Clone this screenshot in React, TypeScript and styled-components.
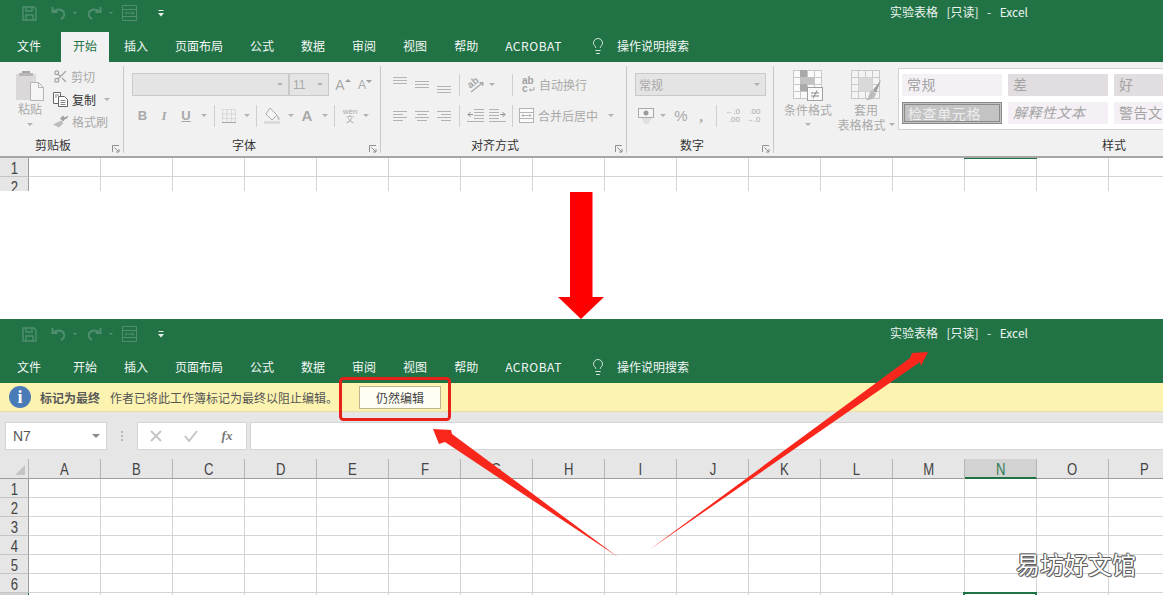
import React from "react";
import styled, { createGlobalStyle } from "styled-components";
import { Scissors, Lightbulb } from "lucide-react";

const CJK = `"Noto Sans CJK SC", "Noto Sans", sans-serif`;
const LATIN = `"Liberation Sans", "Noto Sans CJK SC", sans-serif`;
const GREEN = "#217346";
const MUTED = "#a9a9a9";

const Global = createGlobalStyle`
  html, body { margin: 0; padding: 0; height: 595px; overflow: hidden; background: #fff; }
  body { font-family: ${CJK}; font-size: 12px; }
  #root { width: 1163px; height: 595px; overflow: hidden; }
`;

const Page = styled.div`
  position: relative;
  width: 1163px;
  height: 595px;
  overflow: hidden;
  display: flex;
  flex-direction: column;
`;

/* ---------- title and tabs ---------- */
const GreenBar = styled.header<{ $top: number }>`
  background: ${GREEN};
  padding-top: ${(p) => p.$top}px;
  color: #fff;
  flex: none;
`;
const TitleRow = styled.div`
  height: 31px;
  display: flex;
  align-items: center;
  justify-content: space-between;
  padding: 0 135px 7px 22px;
  box-sizing: border-box;
`;
const Qat = styled.div`
  display: flex;
  align-items: center;
  margin-top: 2px;
`;
const QatSlot = styled.span<{ $w: number }>`
  width: ${(p) => p.$w}px;
  height: 16px;
  display: flex;
  align-items: center;
  justify-content: flex-start;
`;
const DimCaret = styled.span`
  width: 0;
  height: 0;
  border-left: 2px solid transparent;
  border-right: 2px solid transparent;
  border-top: 2px solid #5b9679;
`;
const Title = styled.div`
  display: flex;
  gap: 8.5px;
  font-size: 12px;
  color: #eef5f1;
  line-height: 16px;
`;
const TabRow = styled.nav`
  height: 31px;
  display: flex;
  gap: 3px;
  padding-left: 5px;
  overflow: hidden;
`;
const Tab = styled.div<{ $active?: boolean; $gapAfter?: number }>`
  padding: 0 12px;
  margin-top: ${(p) => (p.$active ? 1 : 0)}px;
  margin-right: ${(p) => p.$gapAfter ?? 0}px;
  line-height: ${(p) => (p.$active ? 27 : 29)}px;
  font-size: 12px;
  color: ${(p) => (p.$active ? GREEN : "#f3f7f5")};
  background: ${(p) => (p.$active ? "#f1f1f1" : "transparent")};
`;
const WideTab = styled(Tab)`
  letter-spacing: 0.55px;
`;
const TellMe = styled.div`
  display: flex;
  align-items: center;
  gap: 10px;
  height: 29px;
  margin-left: 12px;
  color: #f3f7f5;
`;

/* ---------- ribbon ---------- */
const Ribbon = styled.section`
  height: 90px;
  background: #f1f1f1;
  padding-top: 4px;
  display: flex;
  overflow: hidden;
  flex: none;
  border-bottom: 2px solid #a6a6a6;
`;
const Group = styled.div<{ $w: number }>`
  position: relative;
  flex: none;
  width: ${(p) => p.$w}px;
  height: 87px;
  box-sizing: border-box;
  border-right: 1px solid #c8c8c8;
  display: flex;
  flex-direction: column;
  &:last-child { border-right: none; }
`;
const GroupBody = styled.div<{ $pad?: number }>`
  height: 71px;
  padding-left: ${(p) => p.$pad ?? 0}px;
  display: flex;
  flex-direction: column;
`;
const Caption = styled.div<{ $inset?: number }>`
  height: 16px;
  line-height: 16px;
  text-align: center;
  font-size: 12px;
  color: #333;
  padding-right: ${(p) => p.$inset ?? 0}px;
`;
const Launcher = styled.span`
  position: absolute;
  right: 3px;
  bottom: 0px;
  width: 8px;
  height: 8px;
  display: flex;
`;
const Row1 = styled.div`
  margin-top: 7px;
  height: 23px;
  display: flex;
  align-items: center;
`;
const Row2 = styled.div`
  margin-top: 8px;
  height: 23px;
  display: flex;
  align-items: center;
`;
const Slot = styled.span<{ $w: number; $align?: string }>`
  flex: none;
  width: ${(p) => p.$w}px;
  height: 23px;
  display: flex;
  align-items: center;
  justify-content: ${(p) => p.$align ?? "center"};
  color: ${MUTED};
  font-family: ${LATIN};
`;
const Caret = styled.span`
  width: 0;
  height: 0;
  border-left: 3px solid transparent;
  border-right: 3px solid transparent;
  border-top: 3px solid #b2b2b2;
`;
const PasteCaret = styled(Caret)`
  margin-top: 6px;
`;
const Sep = styled.span<{ $m?: number }>`
  flex: none;
  width: 1px;
  height: 22px;
  background: #cfcfcf;
  margin: 0 ${(p) => p.$m ?? 3}px;
`;
const Combo = styled.div<{ $w: number }>`
  flex: none;
  width: ${(p) => p.$w}px;
  height: 23px;
  box-sizing: border-box;
  background: #e4e4e4;
  border: 1px solid #c9c9c9;
  display: flex;
  align-items: center;
  justify-content: space-between;
  padding: 0 5px 0 3px;
  color: ${MUTED};
  font-size: 12px;
  font-family: ${LATIN};
`;
const Bold = styled.b`
  font-size: 13px;
`;
const Italic = styled.i`
  font-size: 13px;
  font-family: "Liberation Serif", serif;
  font-weight: 700;
`;
const Under = styled.b`
  font-size: 13px;
  text-decoration: underline;
`;
const BigA = styled.b`
  font-size: 15px;
`;
const GrowA = styled.span<{ $size: number }>`
  font-size: ${(p) => p.$size}px;
  position: relative;
`;
const TinyArrow = styled.span<{ $up?: boolean }>`
  position: absolute;
  right: -6px;
  top: 2px;
  width: 0;
  height: 0;
  border-left: 3px solid transparent;
  border-right: 3px solid transparent;
  border-${(p) => (p.$up ? "bottom" : "top")}: 3px solid #9f9f9f;
`;
const Pinyin = styled.span`
  display: flex;
  flex-direction: column;
  align-items: center;
  font-size: 8px;
  line-height: 8px;
`;
const TextLabel = styled.span<{ $dark?: boolean }>`
  font-size: 12px;
  font-family: ${CJK};
  color: ${(p) => (p.$dark ? "#333" : MUTED)};
  white-space: nowrap;
`;
const Percent = styled.span`
  font-size: 15px;
`;
const Comma = styled.b`
  font-size: 15px;
  line-height: 10px;
  font-family: "Liberation Serif", serif;
`;
const Decimal = styled.span`
  display: flex;
  flex-direction: column;
  align-items: flex-end;
  font-size: 8px;
  line-height: 8px;
`;

/* clipboard */
const ClipLayout = styled.div`
  display: flex;
  height: 71px;
  padding-left: 15px;
`;
const PasteButton = styled.div`
  width: 30px;
  margin-top: 4px;
  display: flex;
  flex-direction: column;
  align-items: center;
  gap: 1px;
  color: ${MUTED};
  line-height: 14px;
`;
const ClipCol = styled.div`
  margin: 0 0 0 8px;
  display: flex;
  flex-direction: column;
`;
const ClipItem = styled.div`
  height: 22.5px;
  margin-top: -0.3px;
  display: flex;
  align-items: center;
  gap: 3px;
`;

/* styles */
const StyleLayout = styled.div`
  display: flex;
  height: 71px;
`;
const BigTool = styled.div<{ $w: number; $ml: number }>`
  width: ${(p) => p.$w}px;
  margin-left: ${(p) => p.$ml}px;
  padding-top: 4px;
  box-sizing: border-box;
  display: flex;
  flex-direction: column;
  align-items: center;
  color: ${MUTED};
  line-height: 15px;
`;
const ToolIcon = styled.span`
  height: 32px;
  display: flex;
`;
const ToolLine = styled.span`
  display: flex;
  align-items: center;
  gap: 3px;
  height: 15px;
  white-space: nowrap;
`;
const Gallery = styled.div`
  margin: 2px 0 0 2px;
  height: 62px;
  box-sizing: border-box;
  background: #fff;
  border: 1px solid #d2d2d2;
  border-right: none;
  padding: 5px 3px;
  display: grid;
  grid-template-columns: repeat(3, 100px);
  grid-template-rows: 22px 22px;
  gap: 6px;
  width: 290px;
`;
const StyleCell = styled.div<{ $bg: string; $italic?: boolean; $checked?: boolean }>`
  background: ${(p) => p.$bg};
  box-sizing: border-box;
  padding-left: ${(p) => (p.$checked ? 3 : 5)}px;
  font-size: 14px;
  line-height: ${(p) => (p.$checked ? 16 : 21)}px;
  letter-spacing: ${(p) => (p.$checked ? 0.6 : 0.5)}px;
  white-space: nowrap;
  color: ${(p) => (p.$checked ? "#eeeeee" : "#a3a3a3")};
  font-style: ${(p) => (p.$italic ? "italic" : "normal")};
  border: ${(p) => (p.$checked ? "3px double #8a8a8a" : "none")};
`;

/* ---------- notice and formula bar ---------- */
const Notice = styled.div`
  height: 29px;
  box-sizing: border-box;
  flex: none;
  background: #fcf3b1;
  border-bottom: 1px solid #e7e0a2;
  display: flex;
  align-items: center;
  padding-left: 9px;
  color: #555;
`;
const InfoDot = styled.span`
  width: 22px;
  height: 22px;
  border-radius: 50%;
  background: #4a7bb7;
  color: #fff;
  display: flex;
  align-items: center;
  justify-content: center;
  font: 700 18px "Liberation Serif", serif;
  margin-right: 9px;
`;
const NoticeHead = styled.strong`
  font-weight: 700;
  margin-right: 10px;
  color: #5a5a5a;
`;
const NoticeBtn = styled.button`
  margin-left: 21px;
  width: 82px;
  height: 23px;
  padding: 0;
  background: #fffef5;
  border: 1px solid #bdb68f;
  font: 12px ${CJK};
  color: #444;
`;
const FormulaArea = styled.div`
  flex: none;
  height: 47px;
  box-sizing: border-box;
  background: #e6e6e6;
  padding: 10px 0 0 5px;
  display: flex;
  align-items: flex-start;
`;
const NameBox = styled.div`
  width: 102px;
  height: 28px;
  box-sizing: border-box;
  background: #fff;
  border: 1px solid #d4d4d4;
  display: flex;
  align-items: center;
  justify-content: space-between;
  padding: 0 6px 0 7px;
  font: 14px ${LATIN};
  color: #555;
`;
const GripDots = styled.span`
  width: 30px;
  height: 28px;
  display: flex;
  flex-direction: column;
  align-items: center;
  justify-content: center;
  gap: 2px;
  & > i { width: 2px; height: 2px; background: #b8b8b8; display: block; }
`;
const FxBox = styled.div`
  width: 110px;
  height: 28px;
  box-sizing: border-box;
  background: #fff;
  border: 1px solid #d4d4d4;
  display: flex;
  align-items: center;
`;
const FxSlot = styled.span<{ $w: number }>`
  width: ${(p) => p.$w}px;
  display: flex;
  justify-content: center;
  align-items: center;
`;
const FxText = styled.i`
  font: italic 700 13px "Liberation Serif", serif;
  color: #777;
`;
const FormulaInput = styled.div`
  flex: 1;
  height: 28px;
  box-sizing: border-box;
  margin-left: 3px;
  background: #fff;
  border: 1px solid #d4d4d4;
  border-right: none;
`;

/* ---------- sheet ---------- */
const SheetClip = styled.div<{ $h: number }>`
  height: ${(p) => p.$h}px;
  overflow: hidden;
  flex: none;
`;
const TopClip = styled(SheetClip)`
  margin-top: -2px;
  padding-top: 2px;
  position: relative;
`;
const Grid = styled.div`
  display: grid;
  grid-template-columns: 29px repeat(16, 72px);
  grid-auto-rows: 19px;
  width: 1181px;
`;
const HeaderGrid = styled.div`
  display: grid;
  grid-template-columns: 29px repeat(16, 72px);
  grid-auto-rows: 20px;
  width: 1181px;
  background: #e6e6e6;
`;
const Corner = styled.div`
  box-sizing: border-box;
  border-right: 1px solid #b5b5b5;
  border-bottom: 1px solid #9d9d9d;
  display: flex;
  justify-content: flex-end;
  align-items: flex-end;
  padding: 0 3px 3px 0;
  &::before {
    content: "";
    width: 0;
    height: 0;
    border-left: 10px solid transparent;
    border-bottom: 10px solid #c4c4c4;
  }
`;
const ColHead = styled.div<{ $active?: boolean }>`
  box-sizing: border-box;
  border-right: 1px solid #b5b5b5;
  border-bottom: ${(p) => (p.$active ? `2px solid ${GREEN}` : "1px solid #9d9d9d")};
  background: ${(p) => (p.$active ? "#d2d2d2" : "#e6e6e6")};
  color: ${(p) => (p.$active ? "#2f7a55" : "#444")};
  text-align: center;
  font: 16px/21px ${LATIN};
  overflow: hidden;
`;
const Narrow = styled.span`
  display: inline-block;
  transform: scaleX(0.82);
`;
const RowHead = styled.div<{ $active?: boolean }>`
  box-sizing: border-box;
  background: ${(p) => (p.$active ? "#d2d2d2" : "#e6e6e6")};
  border-right: 1px solid ${(p) => (p.$active ? GREEN : "#9d9d9d")};
  border-bottom: 1px solid #c4c4c4;
  text-align: center;
  color: #444;
  font: 16px/21px ${LATIN};
`;
const Cell = styled.div<{ $marker?: boolean; $selected?: boolean }>`
  position: relative;
  box-sizing: border-box;
  border-right: 1px solid #d4d4d4;
  border-bottom: 1px solid #d4d4d4;
  background: #fff;
  ${(p) =>
    p.$marker
      ? `&::before { content: ""; position: absolute; left: -1px; right: -1px; top: 0; height: 1px; background: ${GREEN}; }`
      : ""}
  ${(p) =>
    p.$selected
      ? `&::before { content: ""; position: absolute; left: -2px; right: -1px; top: -1px; height: 8px; border: 2px solid ${GREEN}; background:#fff; }`
      : ""}
`;
const Blank = styled.div`
  height: 128px;
  flex: none;
  background: #fff;
`;

/* ---------- annotations over the picture ---------- */
const Annotations = styled.svg`
  position: absolute;
  left: 0;
  top: 0;
  pointer-events: none;
`;
const Watermark = styled.div`
  position: absolute;
  right: 27px;
  bottom: 16px;
  font: 24px/30px ${CJK};
  color: #fff;
  text-shadow: 1px 0 #5f5f5f, -1px 0 #5f5f5f, 0 1px #5f5f5f, 0 -1px #5f5f5f, 1px 1px #777, -1px -1px #777;
`;

/* ---------- drawings ---------- */
const SaveIcon = () => (
  <svg width="15" height="15" viewBox="0 0 15 15" fill="none" stroke="#4f8f70" strokeWidth="1.4">
    <path d="M1 1h11l2 2v11H1z" />
    <path d="M4 1v4h6V1M4 14V9h7v5" />
  </svg>
);
const UndoIcon = ({ flip }: { flip?: boolean }) => (
  <svg width="15" height="14" viewBox="0 0 15 14" fill="none" stroke="#4f8f70" strokeWidth="2" style={flip ? { transform: "scaleX(-1)" } : undefined}>
    <path d="M1.5 1v5h5" />
    <path d="M2 6c3-3.5 9-3.5 11 .5 1 3-1 5.5-3 6.5" />
  </svg>
);
const FormIcon = () => (
  <svg width="15" height="16" viewBox="0 0 15 16" fill="none" stroke="#4f8f70" strokeWidth="1">
    <path d="M.5.5h14v15H.5zM.5 4.500h14M.5 11.500h14M3 8h9M3 8l1.500-1.500M3 8l1.500 1.500M12 8l-1.500-1.500M12 8l-1.500 1.500" />
  </svg>
);
const CustomizeIcon = () => (
  <svg width="6" height="7" viewBox="0 0 6 7" fill="#e6efe9">
    <rect x="0.500" y="0" width="5" height="1" />
    <path d="M0 3h6L3 6.500z" />
  </svg>
);
const Qa = () => (
  <Qat>
    <QatSlot $w={29}><SaveIcon /></QatSlot>
    <QatSlot $w={22}><UndoIcon /></QatSlot>
    <QatSlot $w={14}><DimCaret /></QatSlot>
    <QatSlot $w={22}><UndoIcon flip /></QatSlot>
    <QatSlot $w={13}><DimCaret /></QatSlot>
    <QatSlot $w={36}><FormIcon /></QatSlot>
    <QatSlot $w={8}><CustomizeIcon /></QatSlot>
  </Qat>
);
const LauncherIcon = () => (
  <svg width="8" height="8" viewBox="0 0 8 8" fill="none" stroke="#8f8f8f" strokeWidth="1">
    <path d="M.5 7V.5H7M2.500 2.500L7 7M7 4v3H4" />
  </svg>
);
const PasteIcon = () => (
  <svg width="30" height="31" viewBox="0 0 30 31">
    <rect x="1" y="4" width="20" height="26" fill="#dbd8d9" />
    <rect x="7" y="1" width="8" height="3" fill="#a9a6a7" />
    <rect x="4" y="3" width="14" height="3" fill="#b9b6b7" />
    <path d="M15.500 12.500h8l5 5v13h-13z" fill="#f5f5f5" stroke="#b5b5b5" />
    <path d="M23.500 12.500v5h5" fill="none" stroke="#b5b5b5" />
  </svg>
);
const CopyIcon = () => (
  <svg width="16" height="15" viewBox="0 0 16 15" fill="#fff" stroke="#666">
    <path d="M.5.5h7v11h-7z" />
    <path d="M5.500 4.500h6l3 3v7h-9z" />
    <path d="M7.500 8.500h5M7.500 10.500h5M7.500 12.500h5M2 3h4M2 5h2" fill="none" strokeWidth=".8" />
  </svg>
);
const BrushIcon = () => (
  <svg width="16" height="13" viewBox="0 0 16 13">
    <path d="M10 .5l3 3-3 3-3-3z" fill="#a2a2a2" />
    <path d="M8 5.500l2.500 2.500L6 12.500 0 9.500z" fill="#bcbcbc" />
    <path d="M12 2.500L15.500.5 13.500 4z" fill="#8f8f8f" />
  </svg>
);
const BorderIcon = () => (
  <svg width="14" height="14" viewBox="0 0 14 14" fill="none" stroke="#c2c2c2" strokeDasharray="1 1">
    <path d="M.5.500h13v13H.5zM.5 5h13M.5 9.500h13M5 .5v13M9.500.5v13" />
    <path d="M0 13.500h14" stroke="#a8a8a8" strokeDasharray="none" />
  </svg>
);
const FillIcon = () => (
  <svg width="18" height="17" viewBox="0 0 18 17">
    <path d="M6 1l7 7-5 5-6-6z" fill="#f5f5f5" stroke="#ababab" />
    <path d="M13 8c2 1.500 3 3 2.500 4.500S13 12 13 8z" fill="#bdbdbd" />
    <rect x="0" y="14" width="16" height="3" fill="#dcdcdc" />
  </svg>
);
const Lines = ({ lines, h = 22, w = 14 }: { lines: number[][]; h?: number; w?: number }) => (
  <svg width={w} height={h} viewBox={`0 0 ${w} ${h}`} stroke="#b3b3b3" strokeWidth="1">
    {lines.map(([x1, x2, y], i) => (
      <line key={i} x1={x1} x2={x2} y1={y + 0.5} y2={y + 0.5} />
    ))}
  </svg>
);
const OrientIcon = () => (
  <svg width="17" height="17" viewBox="0 0 17 17" fill="none">
    <text x="0" y="10" transform="rotate(-38 5 8)" fontFamily="Liberation Sans" fontSize="10" fontWeight="700" fill="#a8a8a8">ab</text>
    <path d="M3 16L15 6.500M15 6.500l-3.500.4M15 6.500l-.4 3.500" stroke="#a8a8a8" strokeWidth="1.300" />
  </svg>
);
const IndentIcon = ({ flip }: { flip?: boolean }) => (
  <svg width="17" height="13" viewBox="0 0 17 13" stroke="#b3b3b3" fill="none" style={flip ? { transform: "scaleX(-1)" } : undefined}>
    <path d="M7 .5h10M7 3.500h10M7 6.500h10M7 9.500h10M0 12.500h17" />
    <path d="M6 5.500H1M1 5.500l2.500-2.500M1 5.500l2.500 2.500" stroke="#8f8f8f" />
  </svg>
);
const WrapIcon = () => (
  <svg width="13" height="17" viewBox="0 0 13 17" fill="none">
    <text x="0" y="8" fontFamily="Liberation Sans" fontSize="10" fontWeight="700" fill="#a2a2a2">ab</text>
    <text x="0" y="16" fontFamily="Liberation Sans" fontSize="10" fontWeight="700" fill="#a2a2a2">c</text>
    <path d="M12 11v3H7.500M7.500 14l1.500-1.300M7.500 14L9 15.300" stroke="#a2a2a2" strokeWidth=".9" />
  </svg>
);
const MergeIcon = () => (
  <svg width="15" height="15" viewBox="0 0 15 15" fill="#fbfbfb" stroke="#b3b3b3">
    <rect x=".5" y=".5" width="14" height="14" />
    <path d="M.5 4.500h14M.5 10.500h14" />
    <path d="M3 7.500h9M3 7.500l1.500-1.500M3 7.500L4.500 9M12 7.500L10.500 6M12 7.500L10.500 9" fill="none" />
  </svg>
);
const CurrencyIcon = () => (
  <svg width="16" height="16" viewBox="0 0 16 16">
    <rect x=".5" y=".5" width="15" height="9" fill="#f5f5f5" stroke="#aaa" />
    <circle cx="8" cy="5" r="2.500" fill="#9a9a9a" />
    <path d="M4 11h9M5 13h7M6 15h5" stroke="#cfcfcf" />
  </svg>
);
const CondIcon = () => (
  <svg width="30" height="31" viewBox="0 0 30 31">
    <g fill="#fafafa" stroke="#c8c8c8">
      {[0, 1, 2, 3].flatMap((c) => [0, 1, 2, 3].map((r) => <rect key={`${c}${r}`} x={c * 7 + 0.5} y={r * 7 + 0.5} width="7" height="7" />))}
    </g>
    <path d="M7 0h7v7h7v7H14v7H7z" fill="#c2c2c2" />
    <path d="M7 0h7v7H7zM7 14h7v7H7z" fill="#a9a9a9" />
    <rect x="14.500" y="17.500" width="15" height="13" fill="#fafafa" stroke="#a0a0a0" />
    <path d="M18 23h8M18 26h8M24 20.500l-4 8" stroke="#8a8a8a" fill="none" />
  </svg>
);
const TableStyleIcon = () => (
  <svg width="31" height="31" viewBox="0 0 31 31">
    <g fill="#f4f4f4" stroke="#c8c8c8">
      {[0, 1, 2, 3].flatMap((c) => [0, 1, 2, 3].map((r) => <rect key={`${c}${r}`} x={c * 7 + 0.5} y={r * 7 + 0.5} width="7" height="7" />))}
    </g>
    <rect x="7.500" y="7.500" width="14" height="14" fill="#d9d9d9" />
    <path d="M30 10l-8 10 3 3z" fill="#9d9d9d" />
    <path d="M21 20l4 4c-1 4-5 6-10 6 3-2 3-8 6-10z" fill="#bcbcbc" />
  </svg>
);
const XIcon = () => (
  <svg width="12" height="12" viewBox="0 0 12 12" stroke="#c6c6c6" strokeWidth="2" fill="none">
    <path d="M1 1l10 10M11 1L1 11" />
  </svg>
);
const CheckIcon = () => (
  <svg width="14" height="12" viewBox="0 0 14 12" stroke="#c6c6c6" strokeWidth="2" fill="none">
    <path d="M1 6l4 5 8-10" />
  </svg>
);
const NameCaret = styled.span`
  width: 0;
  height: 0;
  border-left: 4px solid transparent;
  border-right: 4px solid transparent;
  border-top: 4px solid #8a8a8a;
`;

/* ---------- pieces ---------- */
const TABS = ["插入", "页面布局", "公式", "数据", "审阅", "视图", "帮助"];
const COLS = "ABCDEFGHIJKLMNOP".split("");

const Tabs = ({ ribbonOpen }: { ribbonOpen: boolean }) => (
  <TabRow>
    <Tab $gapAfter={5}>文件</Tab>
    <Tab $active={ribbonOpen}>开始</Tab>
    {TABS.map((t) => (
      <Tab key={t}>{t}</Tab>
    ))}
    <WideTab>ACROBAT</WideTab>
    <TellMe>
      <Lightbulb size={18} color="#e8f0eb" strokeWidth={1.2} />
      操作说明搜索
    </TellMe>
  </TabRow>
);

const TitleBar = ({ top, ribbonOpen }: { top: number; ribbonOpen: boolean }) => (
  <GreenBar $top={top}>
    <TitleRow>
      <Qa />
      <Title>
        <span>实验表格</span>
        <span>[只读]</span>
        <span>-</span>
        <span>Excel</span>
      </Title>
    </TitleRow>
    <Tabs ribbonOpen={ribbonOpen} />
  </GreenBar>
);

const SheetRow = ({ n, markerCol, selectedCol, active }: { n: number; markerCol?: string; selectedCol?: string; active?: boolean }) => (
  <>
    <RowHead $active={active}><Narrow>{n}</Narrow></RowHead>
    {COLS.map((c) => (
      <Cell key={c} $marker={markerCol === c} $selected={selectedCol === c} />
    ))}
  </>
);

const RibbonPanel = () => (
  <Ribbon>
    <Group $w={124}>
      <ClipLayout>
        <PasteButton>
          <PasteIcon />
          <span>粘贴</span>
          <PasteCaret />
        </PasteButton>
        <ClipCol>
          <ClipItem>
            <Scissors size={15} color="#a4a4a4" />
            <TextLabel>剪切</TextLabel>
          </ClipItem>
          <ClipItem>
            <CopyIcon />
            <TextLabel $dark>复制</TextLabel>
            <Slot $w={16}><Caret /></Slot>
          </ClipItem>
          <ClipItem>
            <BrushIcon />
            <TextLabel>格式刷</TextLabel>
          </ClipItem>
        </ClipCol>
      </ClipLayout>
      <Caption $inset={17}>剪贴板</Caption>
      <Launcher><LauncherIcon /></Launcher>
    </Group>

    <Group $w={257}>
      <GroupBody $pad={8}>
        <Row1>
          <Combo $w={157}><span />&nbsp;<Caret /></Combo>
          <Combo $w={40}><span>11</span><Caret /></Combo>
          <Slot $w={22}><GrowA $size={14}>A<TinyArrow $up /></GrowA></Slot>
          <Slot $w={22}><GrowA $size={12}>A<TinyArrow /></GrowA></Slot>
        </Row1>
        <Row2>
          <Slot $w={21}><Bold>B</Bold></Slot>
          <Slot $w={22}><Italic>I</Italic></Slot>
          <Slot $w={22}><Under>U</Under></Slot>
          <Slot $w={14}><Caret /></Slot>
          <Sep />
          <Slot $w={22}><BorderIcon /></Slot>
          <Slot $w={13}><Caret /></Slot>
          <Sep />
          <Slot $w={26}><FillIcon /></Slot>
          <Slot $w={10}><Caret /></Slot>
          <Slot $w={22}><BigA>A</BigA></Slot>
          <Slot $w={13}><Caret /></Slot>
          <Sep />
          <Slot $w={24}><Pinyin><span>wén</span><span>文</span></Pinyin></Slot>
          <Slot $w={8}><Caret /></Slot>
        </Row2>
      </GroupBody>
      <Caption $inset={16}>字体</Caption>
      <Launcher><LauncherIcon /></Launcher>
    </Group>

    <Group $w={246}>
      <GroupBody $pad={12}>
        <Row1>
          <Slot $w={22} $align="flex-start"><Lines lines={[[0, 14, 3], [0, 14, 6], [0, 14, 9]]} /></Slot>
          <Slot $w={22} $align="flex-start"><Lines lines={[[0, 14, 7], [0, 14, 10], [0, 14, 13]]} /></Slot>
          <Slot $w={22} $align="flex-start"><Lines lines={[[0, 14, 12], [0, 14, 15], [0, 14, 18]]} /></Slot>
          <Sep $m={0} />
          <Slot $w={7} />
          <Slot $w={18}><OrientIcon /></Slot>
          <Slot $w={14}><Caret /></Slot>
          <Slot $w={13} />
          <Sep $m={0} />
          <Slot $w={22} $align="flex-end"><WrapIcon /></Slot>
          <Slot $w={4} />
          <TextLabel>自动换行</TextLabel>
        </Row1>
        <Row2>
          <Slot $w={22} $align="flex-start"><Lines lines={[[0, 14, 6], [0, 10, 9], [0, 14, 12], [0, 10, 15]]} /></Slot>
          <Slot $w={22} $align="flex-start"><Lines lines={[[0, 14, 6], [2, 12, 9], [0, 14, 12], [2, 12, 15]]} /></Slot>
          <Slot $w={22} $align="flex-start"><Lines lines={[[0, 14, 6], [4, 14, 9], [0, 14, 12], [4, 14, 15]]} /></Slot>
          <Sep $m={0} />
          <Slot $w={7} />
          <Slot $w={17}><IndentIcon /></Slot>
          <Slot $w={5} />
          <Slot $w={17}><IndentIcon flip /></Slot>
          <Slot $w={6} />
          <Sep $m={0} />
          <Slot $w={21} $align="flex-end"><MergeIcon /></Slot>
          <Slot $w={4} />
          <TextLabel>合并后居中</TextLabel>
          <Slot $w={25}><Caret /></Slot>
        </Row2>
      </GroupBody>
      <Caption $inset={17}>对齐方式</Caption>
      <Launcher><LauncherIcon /></Launcher>
    </Group>

    <Group $w={147}>
      <GroupBody $pad={8}>
        <Row1>
          <Combo $w={131}>
            <TextLabel>常规</TextLabel>
            <Caret />
          </Combo>
        </Row1>
        <Row2>
          <Slot $w={22}><CurrencyIcon /></Slot>
          <Slot $w={12}><Caret /></Slot>
          <Slot $w={3} />
          <Slot $w={18}><Percent>%</Percent></Slot>
          <Slot $w={22}><Comma>,</Comma></Slot>
          <Slot $w={4} />
          <Sep $m={0} />
          <Slot $w={5} />
          <Slot $w={21}><Decimal><span>←.0</span><span>.00</span></Decimal></Slot>
          <Slot $w={20}><Decimal><span>.00</span><span>→.0</span></Decimal></Slot>
        </Row2>
      </GroupBody>
      <Caption $inset={16}>数字</Caption>
      <Launcher><LauncherIcon /></Launcher>
    </Group>

    <Group $w={680}>
      <StyleLayout>
        <BigTool $w={50} $ml={9}>
          <ToolIcon><CondIcon /></ToolIcon>
          <ToolLine>条件格式</ToolLine>
          <ToolLine><Caret /></ToolLine>
        </BigTool>
        <BigTool $w={60} $ml={3}>
          <ToolIcon><TableStyleIcon /></ToolIcon>
          <ToolLine>套用</ToolLine>
          <ToolLine>表格格式<Caret /></ToolLine>
        </BigTool>
        <Gallery>
          <StyleCell $bg="#f4f0f5">常规</StyleCell>
          <StyleCell $bg="#e2dde0">差</StyleCell>
          <StyleCell $bg="#e2dde0">好</StyleCell>
          <StyleCell $bg="#c3c3c3" $checked>检查单元格</StyleCell>
          <StyleCell $bg="#f4f0f5" $italic>解释性文本</StyleCell>
          <StyleCell $bg="#f4f0f5">警告文本</StyleCell>
        </Gallery>
      </StyleLayout>
      <Caption>样式</Caption>
    </Group>
  </Ribbon>
);

export default function App() {
  return (
    <Page>
      <Global />
      <TitleBar top={0} ribbonOpen />
      <RibbonPanel />
      <TopClip $h={33}>
        <Grid>
          <SheetRow n={1} markerCol="N" />
          <SheetRow n={2} />
        </Grid>
      </TopClip>
      <Blank />

      <TitleBar top={2} ribbonOpen={false} />
      <Notice>
        <InfoDot>i</InfoDot>
        <NoticeHead>标记为最终</NoticeHead>
        <span>作者已将此工作簿标记为最终以阻止编辑。</span>
        <NoticeBtn>仍然编辑</NoticeBtn>
      </Notice>
      <FormulaArea>
        <NameBox>
          N7
          <NameCaret />
        </NameBox>
        <GripDots><i /><i /><i /></GripDots>
        <FxBox>
          <FxSlot $w={36}><XIcon /></FxSlot>
          <FxSlot $w={34}><CheckIcon /></FxSlot>
          <FxSlot $w={38}><FxText>fx</FxText></FxSlot>
        </FxBox>
        <FormulaInput />
      </FormulaArea>
      <SheetClip $h={136}>
        <HeaderGrid>
          <Corner />
          {COLS.map((c) => (
            <ColHead key={c} $active={c === "N"}><Narrow>{c}</Narrow></ColHead>
          ))}
        </HeaderGrid>
        <Grid>
          {[1, 2, 3, 4, 5, 6].map((n) => (
            <SheetRow key={n} n={n} />
          ))}
          <SheetRow n={7} selectedCol="N" active />
        </Grid>
      </SheetClip>

      <Annotations width="1163" height="595" viewBox="0 0 1163 595">
        <path d="M570 192h22.500v105H604L581 319 558 297h12z" fill="#fe0000" />
        <rect x="340.500" y="378.500" width="109" height="41" rx="3" fill="none" stroke="#e8201a" strokeWidth="3" />
        <polygon points="433,429 451,430 452,434 618,557 445,442 439,444" fill="#f9261c" />
        <polygon points="928,352 912,353 910,358 649,550 920,362 921,366" fill="#f9261c" />
      </Annotations>
      <Watermark>易坊好文馆</Watermark>
    </Page>
  );
}
